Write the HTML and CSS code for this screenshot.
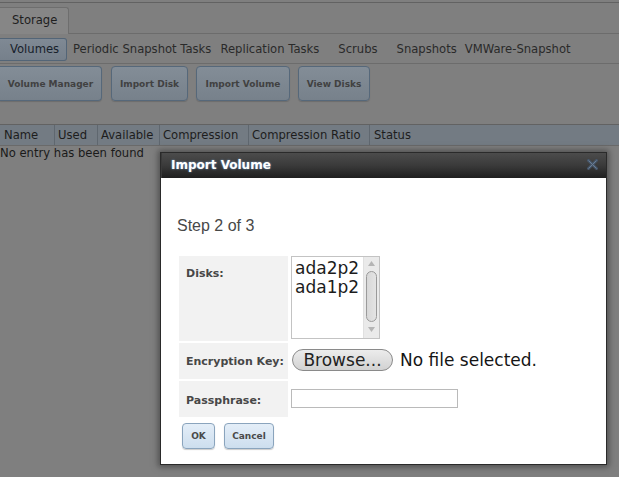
FILE: index.html
```html
<!DOCTYPE html>
<html>
<head>
<meta charset="utf-8">
<link rel="stylesheet" href="styles.css">
</head>
<body>
<div class="page">
  <div class="tabbar">
    <div class="tab">Storage</div>
  </div>
  <div class="subtabs">
    <span class="subtab active">Volumes</span>
    <span class="subtab s1">Periodic Snapshot Tasks</span>
    <span class="subtab s2">Replication Tasks</span>
    <span class="subtab s3">Scrubs</span>
    <span class="subtab s4">Snapshots</span>
    <span class="subtab s5">VMWare-Snapshot</span>
  </div>
  <div class="actions">
    <span class="btn b1">Volume Manager</span>
    <span class="btn b2">Import Disk</span>
    <span class="btn b3">Import Volume</span>
    <span class="btn b4">View Disks</span>
  </div>
  <div class="thead">
    <span class="th c1">Name</span>
    <span class="th c2">Used</span>
    <span class="th c3">Available</span>
    <span class="th c4">Compression</span>
    <span class="th c5">Compression Ratio</span>
    <span class="th c6">Status</span>
  </div>
  <div class="empty">No entry has been found</div>
</div>

<div class="dialog">
  <div class="dtitle">
    <span class="dtitle-text">Import Volume</span>
    <svg class="dclose" width="11" height="11" viewBox="0 0 11 11">
      <path d="M1.5 1.5 L9.5 9.5 M9.5 1.5 L1.5 9.5" stroke="#46566a" stroke-width="2.8" stroke-linecap="square"/>
      <path d="M1.5 1.5 L9.5 9.5 M9.5 1.5 L1.5 9.5" stroke="#6a7d92" stroke-width="1"/>
    </svg>
  </div>
  <div class="dbody">
    <div class="step">Step 2 of 3</div>
    <table class="form">
      <tr class="r1">
        <td class="lbl">Disks:</td>
        <td class="val">
          <div class="select">
            <div class="opts">
              <div>ada2p2</div>
              <div>ada1p2</div>
            </div>
            <div class="sbar">
              <svg class="arr up" width="7" height="5" viewBox="0 0 7 5"><path d="M0 5 L3.5 0 L7 5 Z" fill="#b5b5b5"/></svg>
              <div class="thumb"></div>
              <svg class="arr dn" width="7" height="5" viewBox="0 0 7 5"><path d="M0 0 L3.5 5 L7 0 Z" fill="#b5b5b5"/></svg>
            </div>
          </div>
        </td>
      </tr>
      <tr class="r2">
        <td class="lbl">Encryption Key:</td>
        <td class="val">
          <div class="filerow">
            <span class="browse">Browse...</span>
            <span class="nofile">No file selected.</span>
          </div>
        </td>
      </tr>
      <tr class="r3">
        <td class="lbl">Passphrase:</td>
        <td class="val"><div class="pass"></div></td>
      </tr>
    </table>
    <div class="dbtns">
      <span class="dbtn ok">OK</span>
      <span class="dbtn cancel">Cancel</span>
    </div>
  </div>
</div>
</body>
</html>
```
FILE: styles.css
```css
html, body {
  margin: 0;
  padding: 0;
}
body {
  width: 619px;
  height: 477px;
  overflow: hidden;
  background: #7f7f7f;
  font-family: "DejaVu Sans", sans-serif;
  position: relative;
}
.page {
  padding-top: 2px;
}
.tabbar {
  border-top: 1px solid #626262;
  border-bottom: 1px solid #6c6c6c;
  height: 30px;
  display: flex;
  align-items: flex-end;
}
.tab {
  width: 69px;
  height: 27px;
  box-sizing: border-box;
  border: 1px solid #6e6e6e;
  border-bottom: none;
  border-left: none;
  border-radius: 0 3px 0 0;
  background: #868686;
  color: #1e1e1e;
  font-size: 11.6px;
  line-height: 25px;
  padding-left: 12px;
  margin-bottom: -1px;
}
.subtabs {
  height: 29px;
  border-bottom: 1px solid #6c6c6c;
  display: flex;
  align-items: center;
  font-size: 11.6px;
  color: #2a2a2a;
  position: relative;
}
.subtab {
  white-space: nowrap;
}
.subtab.active {
  width: 67px;
  height: 23px;
  box-sizing: border-box;
  border: 1px solid #536577;
  border-left: none;
  border-radius: 0 3px 3px 0;
  background: linear-gradient(#7f8994, #76808b);
  color: #17212b;
  line-height: 20px;
  padding-left: 10px;
  margin-top: 1px;
}
.s1 { margin-left: 6px; }
.s2 { margin-left: 9px; }
.s3 { margin-left: 19px; }
.s4 { margin-left: 19px; }
.s5 { margin-left: 8px; }
.actions {
  display: flex;
  gap: 0;
  padding-top: 2px;
  height: 58px;
  box-sizing: border-box;
}
.btn {
  height: 35px;
  box-sizing: border-box;
  border: 1px solid #56687a;
  border-radius: 4px;
  background: linear-gradient(#838d97, #77818b);
  color: #414141;
  font-size: 9px;
  font-weight: bold;
  display: flex;
  align-items: center;
  justify-content: center;
  box-shadow: 0 1px 1px rgba(0,0,0,0.15);
}
.b1 { width: 102px; margin-left: 0; border-left: none; border-radius: 0 4px 4px 0; }
.b2 { width: 77px; margin-left: 9px; }
.b3 { width: 94px; margin-left: 8px; }
.b4 { width: 72px; margin-left: 8px; }
.thead {
  display: flex;
  height: 20px;
  border-top: 1px solid #626262;
  border-bottom: 1px solid #6a6a6a;
  background: #737b83;
  font-size: 11.6px;
  color: #1d1d1d;
  margin-top: 2px;
}
.th {
  box-sizing: border-box;
  border-right: 1px solid #5f676f;
  line-height: 20px;
  padding-left: 4px;
  white-space: nowrap;
  overflow: hidden;
}
.c1 { width: 55px; }
.c2 { width: 43px; padding-left: 3px; }
.c3 { width: 62px; padding-left: 3px; }
.c4 { width: 89px; padding-left: 3px; }
.c5 { width: 121px; padding-left: 3px; }
.c6 { flex: 1; border-right: none; }
.empty {
  font-size: 11.6px;
  color: #1a1a1a;
  line-height: 14px;
  margin-top: 0;
}

/* dialog overlays the dimmed page */
.dialog {
  position: absolute;
  left: 160px;
  top: 152px;
  width: 447px;
  height: 313px;
  box-sizing: border-box;
  border: 1px solid #2a2a2a;
  background: #ffffff;
  box-shadow: 0 0 6px 2px rgba(40,40,40,0.55);
  display: flex;
  flex-direction: column;
}
.dtitle {
  height: 25px;
  background: linear-gradient(#4c4c4c, #3a3a3a 50%, #1f1f1f);
  display: flex;
  align-items: center;
  justify-content: space-between;
  padding: 0 8px 0 9px;
  border-left: 1px solid #3a3a3a;
}
.dtitle-text {
  color: #ffffff;
  font-weight: bold;
  font-size: 12px;
  text-shadow: 0 0 2px #7aa7d8;
  margin-top: -1px;
}
.dclose {
  margin-top: -3px;
}
.dbody {
  padding: 0 0 0 16px;
  flex: 1;
}
.step {
  font-family: "Liberation Sans", Arial, sans-serif;
  font-size: 16px;
  color: #484848;
  margin-top: 39px;
  line-height: 18px;
}
.form {
  border-collapse: separate;
  border-spacing: 2px;
  margin-top: 19px;
}
.form td {
  padding: 0;
  vertical-align: top;
}
.lbl {
  width: 109px;
  box-sizing: border-box;
  background: #f2f2f2;
  font-size: 11px;
  font-weight: bold;
  color: #474747;
  padding: 11px 0 0 7px !important;
}
.r1 td { height: 85px; }
.r2 td { height: 36px; }
.r3 td { height: 36px; }
.r2 .lbl { padding-top: 12px !important; }
.r3 .lbl { padding-top: 13px !important; }
.val {
  padding-left: 1px !important;
}
.select {
  width: 89px;
  height: 83px;
  box-sizing: border-box;
  border: 1px solid #c3c3c3;
  background: #fff;
  display: flex;
}
.opts {
  flex: 1;
  font-size: 17px;
  line-height: 19px;
  color: #1c1c1c;
  padding: 2px 0 0 3px;
}
.sbar {
  width: 15px;
  background: #eaeaea;
  display: flex;
  flex-direction: column;
  align-items: center;
  border-left: 1px solid #e0e0e0;
}
.arr {
  display: block;
  margin-top: 4px;
}
.arr.dn {
  margin-top: 5px;
}
.thumb {
  width: 11px;
  height: 51px;
  margin-top: 5px;
  box-sizing: border-box;
  border: 1px solid #9a9a9a;
  border-radius: 6px;
  background: linear-gradient(90deg, #d8d8d8, #e4e4e4);
}
.filerow {
  display: flex;
  align-items: center;
  margin-top: 6px;
  margin-left: 1px;
}
.browse {
  width: 101px;
  height: 22px;
  box-sizing: border-box;
  border: 1px solid #8a8a8a;
  border-radius: 11px;
  background: linear-gradient(#ececec, #d2d2d2);
  font-size: 17px;
  color: #222;
  display: flex;
  align-items: center;
  justify-content: center;
}
.nofile {
  font-size: 17px;
  color: #151515;
  margin-left: 7px;
}
.pass {
  width: 167px;
  height: 19px;
  box-sizing: border-box;
  border: 1px solid #bababa;
  background: #fff;
  margin-top: 8px;
}
.dbtns {
  display: flex;
  gap: 9px;
  margin-top: 4px;
  margin-left: 5px;
}
.dbtn {
  height: 26px;
  box-sizing: border-box;
  border: 1px solid #8aa4bd;
  border-radius: 4px;
  background: linear-gradient(#e4eef8, #cddeee);
  box-shadow: 0 1px 1px rgba(0,0,0,0.2);
  font-size: 9px;
  font-weight: bold;
  color: #4a4a4a;
  display: flex;
  align-items: center;
  justify-content: center;
}
.ok { width: 33px; }
.cancel { width: 50px; }
```
